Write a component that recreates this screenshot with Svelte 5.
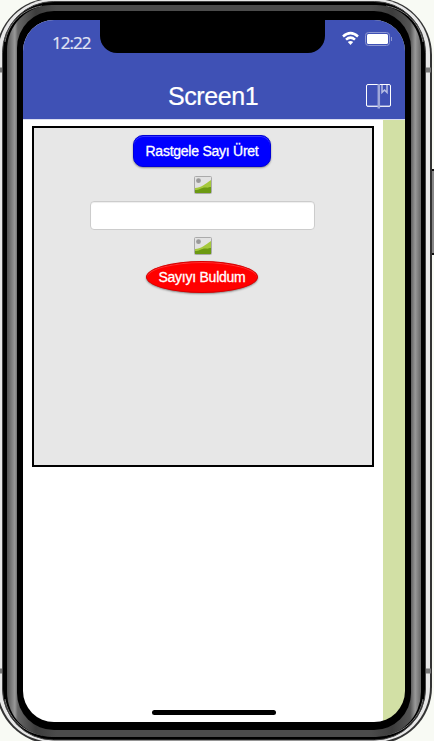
<script>
  const clock = '12:22';
  let guess = $state('');
</script>

{#snippet picture()}
  <svg class="picture" width="18" height="18" viewBox="0 0 18 18" aria-hidden="true">
    <rect x=".5" y=".5" width="17" height="17" rx="1" fill="#e2e2e2" stroke="#aaa" />
    <circle cx="4.5" cy="4.7" r="2.4" fill="#999" />
    <path d="M1 12C7 12 11 8 17 4V17H1Z" fill="#a5c83c" />
    <path d="M1 14C6 14 8 11 12 11.5C14 12 15 11 17 11V17H1Z" fill="#6c9a12" />
  </svg>
{/snippet}

<div class="stage">
  <svg class="frame" width="434" height="741" viewBox="0 0 434 741" aria-hidden="true">
    <defs>
      <linearGradient id="side" gradientUnits="userSpaceOnUse" x1="7" x2="421" y1="0" y2="0">
        <stop stop-color="#555" /><stop offset=".019" stop-color="#999" /><stop offset=".026" stop-color="#666" />
        <stop offset=".07" stop-color="#3c3c3c" /><stop offset=".12" stop-color="#4b4b4b" /><stop offset=".88" stop-color="#4b4b4b" />
        <stop offset=".93" stop-color="#3c3c3c" /><stop offset=".974" stop-color="#555" /><stop offset=".986" stop-color="#999" /><stop offset="1" stop-color="#666" />
      </linearGradient>
    </defs>
    <rect x="431" y="170" width="8" height="84" rx="1" fill="#888" stroke="#111" stroke-width="2" />
    <rect x="-4" y="-2" width="436" height="746" rx="57" fill="#333" />
    <rect x="-2" y="-1" width="432" height="743" rx="55" fill="#e7e7e7" />
    <path d="M-2 70H3M425 70H431M-2 671H3M425 671H431" stroke="#777" stroke-width="5" />
    <rect x="2.5" y="1.5" width="423" height="738.5" rx="51" fill="#000" stroke="#444" />
    <path d="M5 42C8 24 22 9 42 6M423 42C420 24 406 9 386 6M5 699C8 717 22 732 42 735M423 699C420 717 406 732 386 735" fill="none" stroke="#777" stroke-width="1" />
    <rect x="7" y="5" width="414" height="732" rx="45" fill="url(#side)" />
    <rect x="17" y="11" width="394" height="719" rx="37" fill="#000" />
  </svg>

  <main class="screen">
    <header>
      <div class="status">
        <span class="clock">{clock}</span>
        <div class="notch"></div>
        <svg class="signals" width="52" height="18" viewBox="0 0 52 18" aria-hidden="true">
          <g fill="none" stroke="#fff" stroke-width="2.5">
            <path d="M1 6.5Q8.5 -.3 16 6.5" /><path d="M4 9.7Q8.5 5.6 13 9.7" />
          </g>
          <path d="M5.8 12Q8.5 9.8 11.2 12L8.5 15Z" fill="#fff" />
          <rect x="23.5" y="2.5" width="24" height="13" rx="3" fill="none" stroke="#8d97d2" />
          <rect x="25" y="4" width="21" height="10" rx="1.5" fill="#fff" />
          <path d="M49.5 7V11" stroke="#8d97d2" />
        </svg>
      </div>
      <div class="title">
        <h1>Screen1</h1>
        <svg class="book" width="26" height="26" viewBox="0 0 26 26" aria-hidden="true">
          <rect x=".5" y="1.5" width="24" height="22" rx="1.5" fill="none" stroke="#fff" />
          <path d="M1 23H24" stroke="#cbd0eb" />
          <path d="M12.8 1V25.5" stroke="#9fa8da" stroke-width="2.5" />
          <path d="M16 2V9.5L18.5 7L21 9.5V2" fill="none" stroke="#b8bfe4" stroke-width="1.5" />
        </svg>
      </div>
    </header>
    <section class="content">
      <div class="panel">
        <button class="generate">Rastgele Sayı Üret</button>
        {@render picture()}
        <input aria-label="Sayı" bind:value={guess} />
        {@render picture()}
        <button class="found">Sayıyı Buldum</button>
      </div>
      <div class="home"></div>
    </section>
  </main>
</div>

<style>
  .stage {
    position: relative;
    width: 434px;
    height: 741px;
    box-sizing: border-box;
    padding: 20px 29px 19px 23px;
    overflow: hidden;
    background: #f8faf4;
    font-family: "Liberation Sans", Arial, sans-serif;
  }
  .frame { position: absolute; inset: 0; }
  .screen {
    position: relative;
    display: flex;
    flex-direction: column;
    height: 702px;
    border-radius: 31px;
    overflow: hidden;
    background: linear-gradient(90deg, #fff 360px, #d2e0a5 360px);
  }
  header { height: 99px; background: #3f51b5; color: #fff; border-bottom: 1px solid #d9dcf0; box-sizing: content-box; }
  .status { display: flex; height: 33px; }
  .clock {
    width: 48px;
    padding: 12px 0 0 29px;
    font: 17px/21px "Open Sans", "Noto Sans", sans-serif;
    letter-spacing: -0.95px;
    color: #e3e5f4;
    -webkit-text-stroke: 0.2px #e3e5f4;
  }
  .notch { width: 225px; height: 33px; border-radius: 0 0 17px 17px; background: #000; }
  .signals { margin: 10px 0 0 17px; }
  .title { display: flex; align-items: center; height: 66px; padding-left: 145px; }
  h1 { width: 198px; margin: 19px 0 0; font-size: 25px; line-height: 30px; font-weight: 400; letter-spacing: -0.4px; -webkit-text-stroke: 0.2px #fff; }
  .book { margin-top: 19px; }
  .content { flex: 1; display: flex; flex-direction: column; justify-content: space-between; padding: 6px 0 7px 9px; }
  .panel {
    box-sizing: border-box;
    width: 342px;
    height: 341px;
    padding: 7px 2px 0 0;
    border: 2px solid #000;
    background: #e7e7e7;
    display: flex;
    flex-direction: column;
    align-items: center;
  }
  button {
    box-sizing: border-box;
    height: 32px;
    padding: 0;
    color: #fff;
    font: 14px/30px "Liberation Sans", Arial, sans-serif;
    letter-spacing: -0.25px;
    -webkit-text-stroke: 0.3px #fff;
    box-shadow: inset 0 1px 0 rgba(255, 255, 255, 0.2), 0 1px 2px rgba(0, 0, 0, 0.4);
  }
  .generate { width: 138px; border: 1px solid #0000d8; border-radius: 10px; background: #00f; }
  .found { width: 112px; border: 1px solid #d80000; border-radius: 50%; background: #f00; }
  .picture { margin: 9px 0 7px 2px; }
  input {
    box-sizing: border-box;
    width: 225px;
    height: 29px;
    border: 1px solid #ccc;
    border-radius: 4px;
    background: #fff;
    box-shadow: inset 0 1px 1px rgba(0, 0, 0, 0.07);
  }
  input + .picture { margin-top: 7px; margin-bottom: 6px; }
  .home { width: 124px; height: 5px; margin-left: 120px; border-radius: 3px; background: #000; }
</style>
